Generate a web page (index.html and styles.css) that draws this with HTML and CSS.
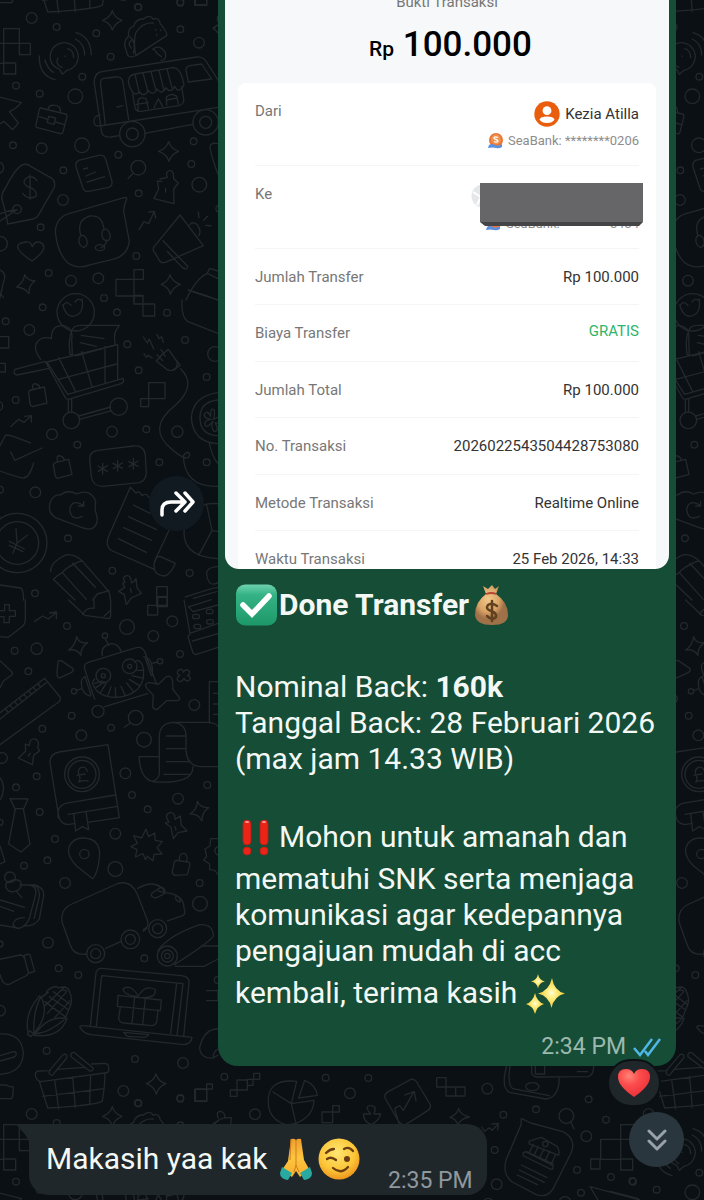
FILE: index.html
```html
<!DOCTYPE html>
<html lang="id">
<head>
<meta charset="utf-8">
<meta name="viewport" content="width=device-width, initial-scale=1">
<title>Chat</title>
<link rel="stylesheet" href="styles.css">
</head>
<body>
<svg class="wallpaper" aria-hidden="true">
  <defs>
    <g id="doodles" transform="scale(.33333)">
      <!-- truck and megaphone section -->
      <g>
        <circle cx="95" cy="54" r="16"/><circle cx="170" cy="81" r="10"/><circle cx="289" cy="100" r="10"/><circle cx="415" cy="22" r="10"/><circle cx="541" cy="8" r="10"/><circle cx="541" cy="88" r="10"/><circle cx="597" cy="128" r="16"/><circle cx="332" cy="170" r="10"/><circle cx="247" cy="230" r="10"/><circle cx="48" cy="257" r="10"/><circle cx="119" cy="281" r="10"/><circle cx="226" cy="289" r="22"/><circle cx="39" cy="436" r="10"/><circle cx="125" cy="445" r="16"/><circle cx="246" cy="436" r="22"/><circle cx="355" cy="464" r="10"/><circle cx="581" cy="424" r="10"/><circle cx="574" cy="492" r="10"/><circle cx="598" cy="554" r="22"/><circle cx="190" cy="511" r="10"/><circle cx="189" cy="600" r="16"/><circle cx="416" cy="580" r="10"/><circle cx="122" cy="682" r="10"/><circle cx="409" cy="768" r="10"/><circle cx="146" cy="819" r="10"/><circle cx="213" cy="842" r="16"/><circle cx="295" cy="835" r="16"/><circle cx="0" cy="731" r="22"/><circle cx="-6" cy="503" r="17"/><circle cx="658" cy="626" r="10"/>
        <path d="M11 86h47v44H-49v60h60zM11 189h36v33H11zM58 130h33v34H58zM-79 189h28v30h-28zM584-20h36v36h-36z"/>
        <path d="M337 32q6 22 29 29q-21 8-29 29q-6-21-29-29q22-8 29-29zM506 425q6 22 30 29q-23 9-29 30q-7-22-31-30q23-7 30-29zM74 824q8 17 31 19q-19 13-18 38q-13-18-37-20q21-13 24-37zM510 824q8 22 31 29q-22 8-30 30q-5-22-27-30q21-8 26-29z"/>
        <path d="M159 195a42 42 0 1 1 42 16l-14 12l-8-15q-12-4-20-13M174 174q-10 19 12 28M203 146q18 4 18 27M228 98q44 12 46 66M226 117q28 13 28 48M118 168q-2 58 47 71M135 180q7 25 25 37M195 168v2"/>
        <path d="M404 168q-22 10-25-17q-13-23 7-44q-4-22 15-28q6-23 29-22q18-16 29 0q20-5 21 13q20 24 21 36l-93 61q-9-37-1-68q20-33 53-30M390 110q20 17 10 50M394 122q-14 8 0 22M467 88v2M482 90v2M470 103v2M462 148q8 13 22 22M458 148q22-17 38 10q5 25-13 23"/>
        <path d="M304 391l-21-140q-3-34 27-37l280-43q20-2 31 17l34 54M302 253q-4-19 18-19l28-3q19-2 21 18l17 110M302 253l14 122M300 378l354-56M300 345q-20 2-18 21q3 17 20 10M304 391q1 23 28 20l25-4M433 400l146-27M558 211q-1-11 12-14l35-5l30 45l-70 9zM351 321l18-4M386 251q-4-26 20-29l112-19q25 0 34 52q-17 29-28 4q-13 24-26 4q-13 24-26 4q-14 24-27 4q-14 24-27 4q-16 22-32-24zM405 223l13 56M429 219l15 56M453 215l15 56M477 211l14 56M501 207l15 56M398 282l8 44q5 10 16 8l114-17q18-5 15-20l-6-37M414 330v-29q4-10 24-6l7 30M462 323l13-27l13 23M500 316l-1-25q16-14 31-2l5 23M409 313l36-5M500 300l31-6"/>
        <circle cx="397" cy="402" r="38"/><circle cx="397" cy="402" r="18"/><circle cx="617" cy="367" r="38"/><circle cx="617" cy="367" r="18"/>
        <path d="M-20 286l84 22q-3 5-22 20l-14 7l27 34l-17 20l-26-25l-20 12M122 324l74 18q6 2 5 8l-12 46q-2 6-8 5l-69-18q-6-1-4-9l10-46q0-3 4-4M144 328q3-14 17-12q23-1 20 22M118 350l25 8M167 366l26 8M146 349l21 5l-5 19l-20-5zM236 481l60-15q17-3 22 14l18 64q2 14-10 18l-60 12q-14 2-18-12l-20-61q-3-14 8-20M251 507l12-3M258 528l29-12M262 546l52-16"/>
        <path d="M5 594q0-15 13-33q24-50 46-65q17-8 28 3l65 37q11 10 5 28l-47 82q-5 9-16 11l-76 15q-4-28-18-78M-15 650q25-17 61-20M51 629L0 663M90 525v73M111 542q-12-16-29-10q-20 14-1 27q33 9 27 30q-24 12-40-9"/><circle cx="51" cy="628" r="13"/>
        <circle cx="415" cy="503" r="22"/><path d="M400 519l-16 17M480 537l22-5l-3-11q11-19 21-1l1 16l14 13l-14 18l1 44l-60-15l14-29l-4-24q7 2 14 1M497 565v11M417 689l15-24l14 6l16-35M447 636l16-2l4 20"/>
        <path d="M379 599q4-8-7-6l-154 45q-50 10-52 57q6 65 38 94q30 20 68 5l63-15q47-10 53-55l-17-91q1-18 8-34zM242 705q-13-46 28-57q39-3 42 42M320 720q-1 16-17 24"/><ellipse cx="249" cy="724" rx="12" ry="18" transform="rotate(-14 249 724)"/><ellipse cx="318" cy="705" rx="12" ry="18" transform="rotate(-14 318 705)"/><ellipse cx="300" cy="743" rx="14" ry="9"/>
        <path d="M540 645l70 92l-114 50q-13 4-18-6l-18-30q-2-10 5-14zM489 722l74 77q0 13-16 4l-45-49M568 675q8-12 23-2q15 19 5 34M595 636l2 17M611 661l12-12M618 676l15 2M96 783q-76-50-18-57q14-2 19 14q7-18 24-13q30 16-25 56z"/>
        <path d="M348 838h54v50h-54zM402 809h28v29h-28zM402 838v62M348 888h80M558 900q30-65 64-80l32 16M622 820l7-15l25 8M580 875l50 16M654 431q-25-5-24 12q5 30 24 80M654 75l-14 8l14 16M0 810q22 10 10 38q-8 40-20 80M0 880l10 12"/>
      </g>
      <!-- shopping cart section -->
      <g transform="translate(0 900)">
        <circle cx="227" cy="37" r="56"/><circle cx="128" cy="22" r="10"/><circle cx="17" cy="64" r="10"/><circle cx="88" cy="90" r="16"/><circle cx="351" cy="37" r="10"/><circle cx="312" cy="-6" r="10"/><circle cx="501" cy="38" r="10"/><circle cx="382" cy="133" r="10"/><circle cx="555" cy="120" r="10"/><circle cx="645" cy="162" r="22"/><circle cx="416" cy="211" r="10"/><circle cx="620" cy="231" r="10"/><circle cx="47" cy="300" r="10"/><circle cx="-6" cy="318" r="14"/><circle cx="156" cy="403" r="16"/><circle cx="232" cy="434" r="10"/><circle cx="336" cy="395" r="16"/><circle cx="439" cy="388" r="10"/><circle cx="532" cy="395" r="17"/><circle cx="478" cy="487" r="10"/><circle cx="620" cy="487" r="10"/><circle cx="106" cy="577" r="16"/><circle cx="0" cy="569" r="10"/><circle cx="204" cy="715" r="10"/><circle cx="337" cy="812" r="10"/><circle cx="569" cy="819" r="10"/><circle cx="105" cy="880" r="10"/><circle cx="511" cy="558" r="15"/>
        <path d="M188 15q14 45 43 30q22-10 15-48M190 16q8-16 23 0M225 6q9-13 20-5M0 110h26v34H0M0 190h16v26H0M402-14h27v26h-27zM429 12h35v36h-35zM446 248h49v48h-49zM422 296h24v24h-24zM546 0q-3 50 16 64l92 36M654 0l-90-30"/>
        <path d="M122 178q-25-33-10-52q14-20 42-10q-1-40 35-39q32 5 26 44l2 42M210 163q-6-45 5-70q5-18 28-17h115l-10 15q-8 14-2 44l-110 30q-13 4-26-2M244 106l68 10M241 128l48 11"/>
        <path d="M45 208l91-24l59 107q4 8 10 7l158-47q12-5 6-16l-166 48l-62-97l212-52v102M45 208q-8 14 6 17l93-19M176 173l51 102M245 155l31 105M315 139v110M173 239l177-47M205 298v40M215 296v40M236 348l96-27M239 358l96-26"/><circle cx="214" cy="361" r="25"/><circle cx="356" cy="320" r="26"/>
        <path d="M93 270l40-9l8 48l-44 11q-6-2-7-9l-4-33q0-6 7-8zM99 268q-6-22 13-15q9 6 7 12M168 487l38-9l10 45l-44 12q-4-1-6-7l-6-32q0-6 8-9zM173 484q-7-22 12-15q9 6 7 12"/>
        <path d="M32 380l24-22l16 9l22-20M74 349l20-2v19M-10 455l27-50l16 2l59 22M32 456l12 25l82-37M-10 510q74 25 80 24q18 0 31-45"/>
        <path d="M430 111l12 18l6-12l13 30M471 104l6 12l8-6l5 17M432 162l8 10l5-6l11 8M505 148l27 38l-3 19q-10 11-27 4l-33-26q16-21 36-35M483 149l13 20M471 164l17 18M540 196l-7-10M518 210l22-14M542 206q50 50-16 110q-90 70-8 134q48 40 51 13q-6-14-19 4q3 95 104 92"/>
        <path d="M654 278q-75 10-80 75q5 75 80 78M654 300q-54 5-54 53q0 52 54 54M612 345q10-19 20 5q-1-31 11-19q2 20-4 28q28-17 31-3q-9 18-25 12q15 30-4 25q-9-13-3-29q-20 27-24 6q4-11 20-12q-18-1-22-13M628 430q10 45 26 60"/>
        <path d="M294 451l106-13q34-2 36 28l3 55q-3 22-21 27l-109 11q-30 0-35-28l-5-52q-1-25 25-28zM308 490v32M294 498l28 16M322 497l-27 17M353 482v31M339 490l28 15M367 489l-27 17M400 475v32M386 484l28 15M414 483l-27 17"/>
        <path d="M182 585q20-18 48-3q42-18 57 22q-3 24 0 32q11 30-3 44q-13 12-35 4l-83-31q-28-20-12-54q11-17 28-14zM251 617q-36-23-42 12q5 36 38 20M251 617v-12M251 618h-15"/>
        <path d="M391 562l-62 139q-18 40 9 52l125 55M391 562l17 17q10-9 18 8q13-10 20 5l79 36M400 615l50 25M385 650l85 39M371 683l84 38M355 716l84 41M526 650l-62 133q-10 43 31 45q18-6 31-38l-44-20q-14-3-17 15"/>
        <circle cx="52" cy="729" r="89"/><circle cx="52" cy="729" r="64"/><path d="M-10 650h10M48 686l3 44l-13 30M51 730l31-24M28 724l45 23M28 736l41 19M654 611q-78-6-99 60q-20 100 99 105M620 614l16 78l-40 74M638 692l20 3"/>
        <path d="M152 815q-2-28 45-50q25-6 51 19l78 90q5 10 5 26M160 838q10-11 27-20q10-14 33-24q18-12 28-10M160 838l65 62M187 818l72 80M218 790l68 72M278 900l14-18l35-10M0 855l62 9q8 2 9 36M368 850l7-3q-11-16 5-20q13-2 14 21q6 1 14-12l3 27l13 17l-30 14l-15 20l-6-30l-17-10l18-12zM391 865l3 12M470 860h32v60h-32zM470 892h32M654 800q-40 2-33 28q6 35 33 20M556 891q90-30 98-28M580 895l70-20"/>
      </g>
      <!-- robot and book section -->
      <g transform="translate(0 1800)">
        <circle cx="201" cy="78" r="10"/><circle cx="381" cy="81" r="22"/><circle cx="460" cy="108" r="16"/><circle cx="517" cy="64" r="16"/><circle cx="540" cy="162" r="10"/><circle cx="44" cy="152" r="10"/><circle cx="110" cy="146" r="17"/><circle cx="85" cy="214" r="10"/><circle cx="215" cy="347" r="10"/><circle cx="127" cy="386" r="10"/><circle cx="244" cy="406" r="16"/><circle cx="333" cy="383" r="10"/><circle cx="432" cy="419" r="22"/><circle cx="583" cy="315" r="16"/><circle cx="6" cy="474" r="16"/><circle cx="110" cy="529" r="10"/><circle cx="48" cy="562" r="10"/><circle cx="119" cy="636" r="10"/><circle cx="0" cy="667" r="9"/><circle cx="376" cy="520" r="16"/><circle cx="396" cy="585" r="10"/><circle cx="443" cy="628" r="10"/><circle cx="534" cy="596" r="16"/><circle cx="622" cy="555" r="10"/><circle cx="346" cy="701" r="16"/><circle cx="165" cy="717" r="10"/><circle cx="142" cy="781" r="10"/><circle cx="72" cy="797" r="10"/><circle cx="346" cy="807" r="22"/><circle cx="195" cy="849" r="16"/><circle cx="599" cy="849" r="10"/>
        <path d="M0 110l25 2l41-32q10-8 10-24V0M14 14h14v18h18v17H28v19H12V50h-16V32h18zM104 64l24-16l17 9l25-20M149 39l20-3v20M206 0l48 46l74 10l4-8V0M248 44q10-23 34-19V0M312 49l18-17M443 16h30v29h-30zM473-10h28v26h-28zM552 0l18 100l84-30M565 20l14 15l75-20M570 105q-7 0-5 9l14 45l8 5l67-22M578 123l76-22M568 20l66-21"/>
        <rect x="578" y="43" width="20" height="13" rx="6"/><rect x="619" y="28" width="20" height="13" rx="6"/><rect x="582" y="73" width="20" height="13" rx="6"/><rect x="620" y="59" width="20" height="13" rx="6"/>
        <path d="M230 110q6 22 33 18q-22 15-20 38q-12-20-37-16q20-13 24-40zM592 604q8 20 34 19q-21 15-20 40q-13-23-36-21q22-13 22-38zM0 182l36 34q4 8-5 12l-21 15l-10 20M184 182l34 23q5 8-5 13l-32 15q-9 2-10-9q1-34 5-42zM535 211q12-8 15 6q7-14 18-3q3 9-6 12q15 7 5 15q-11 4-15-6q-8 16-19 6q-5-8 6-15q-12-6-4-15"/>
        <path d="M315 114l11 22M307 166q-6-28 26-35q22-1 30 23M255 207q-6-15 10-20l144-44q17-5 26 14l35 97M254 207l30 91M314 320l129-39M243 267l-14 5M270 288q-26-7-26-38q0-17 12-20M273 285l-18-55M431 170q30 6 26 55M472 186l-16 4M436 175l18 52M284 237q-10 10-4 18q14 37 70 37q70-6 80-60q4-45-17-51q-6 1-10 5M284 250l22-7M288 263l25-18M300 280l18-29M323 289l10-28M347 291l-1-28M375 286l-12-27M400 274l-20-25M419 257l-31-19M430 235l-34-8M432 211h-22"/><circle cx="315" cy="107" r="8"/><circle cx="310" cy="227" r="22"/><circle cx="310" cy="227" r="6"/><circle cx="389" cy="199" r="22"/><circle cx="389" cy="199" r="6"/><circle cx="222" cy="274" r="8"/><circle cx="480" cy="184" r="8"/><circle cx="294" cy="334" r="18"/>
        <path d="M512 231q8 6 6 36l20 26q4 10-12 9l-26 0l-28 26q-14 3-14-12l2-30l-20-22q-10-14 8-16l28 4l22-21q8-5 14 0"/>
        <path d="M0 338l134-103l46 56q4 8-4 15L0 434M0 357l138-108M16 327l8 9M30 316l8 9M44 305l8 9M58 295l8 9M72 284l8 9M86 273l8 9M100 262l8 9M114 252l8 9"/><circle cx="407" cy="353" r="22"/><path d="M391 369l-18 13M76 432l12 5q0-23 18-20q14 7 7 27l6 8l-18 14l-4 28l-42-20l22-20zM91 460l-6 8"/>
        <path d="M654 245h-26v124M640 280h14M640 312h14M640 343h14M417 470h61M417 470q4 75 52 76q110 6 110-46M478 520V407q2-37 40-40q38 3 40 37v48q4 45 42 48h54M520 367h108q19 2 26 12M460 543q17-6 18-23M499 408h56M499 446h58M499 485h70M492 523h75"/>
        <path d="M178 456l146-22l34 219l-95 14M221 671q-38 10-45-24l-26-158q-1-28 28-33M175 654q-6-35 21-44l150-25M204 643l149-24M221 641l6 52l20-13l19 9l-8-54"/><circle cx="246" cy="523" r="52"/><circle cx="246" cy="523" r="42"/><path d="M262 514q-4-15-18-12q-12 6-8 20q8 18 0 24q15-6 28-3M231 526l24-4"/>
        <path d="M30 596l54 1l-13 29H45zM46 626l-20 106l37 24l27-23l-20-107M0 534q20 25 2 64M0 738l15 47l-15 7M438 687l8 23l18-11l2 22l21 4l-16 18l15 19l-24 1l-3 19l-17-13l-5 10l-8-18l-23 10l5-22l-18-9l19-10l-11-23l24 7zM278 836l-48-38q-30-30-23-56q11-29 44-28q46 2 48 46q-4 60-21 76z"/><circle cx="253" cy="762" r="14"/>
        <path d="M496 670l11-4q-17-24 4-28q15-1 14 20l16-10l3 28l17 17l-27 5l-14 18l-7-34zM525 680l3 10M528 781l37 5q5 2 5 8l-8 30l-37 2q-9-3-8-11l6-30zM538 780q-1-21 15-20q12 5 7 24M654 716h-22l-2 22l-15 9l5 22l-9 11l18 12v17l15 2l10 12M654 740q-20 10 0 26"/>
      </g>
      <!-- camper, laptop and basket section -->
      <g transform="translate(0 2640)">
        <circle cx="144" cy="188" r="16"/><circle cx="0" cy="192" r="9"/><circle cx="176" cy="265" r="10"/><circle cx="235" cy="285" r="10"/><circle cx="433" cy="235" r="10"/><circle cx="600" cy="71" r="22"/><circle cx="0" cy="392" r="16"/><circle cx="140" cy="512" r="10"/><circle cx="405" cy="537" r="10"/><circle cx="549" cy="549" r="16"/><circle cx="370" cy="633" r="16"/><circle cx="414" cy="669" r="10"/><circle cx="541" cy="654" r="10"/><circle cx="673" cy="590" r="10"/><circle cx="765" cy="703" r="16"/><circle cx="653" cy="300" r="10"/>
        <circle cx="30" cy="-8" r="16"/><path d="M20 8q-10 20 15 28q35-5 27-31q-14-13-42 3M60 15h28q20 2 20 25l-16 60q-4 26-23 40q-18 12-30-5q2-22 34-22M72 15h33q28 8 26 32l-13 70q-12 21-44 21M0 60l74 22M0 79l41 15M0 135l58 10M50 35l15 18M100 15q20 7 18 35l-16 66"/>
        <path d="M260 222q-38 6-49-26l-25-70q-5-39 30-54L350 12q42-15 62 31l30 77q7 20-12 29M317 205l45-20M413 25q24-14 45-13q28 3 38 27M440 145l-10 9M502 123l46-16q12-8 4-23q-1-42-57-46l-20-5M460 37l20-14q10-3 14 7q4 9-4 13l-23 11q-14-3-13-11q1-4 6-6M528 47q-5 16 12 19q4-14-12-19"/><circle cx="287" cy="221" r="27"/><circle cx="287" cy="221" r="15"/><circle cx="391" cy="178" r="28"/><circle cx="391" cy="178" r="15"/><circle cx="473" cy="146" r="27"/><circle cx="473" cy="146" r="15"/>
        <circle cx="502" cy="228" r="30"/><circle cx="502" cy="228" r="18"/><circle cx="502" cy="228" r="8"/><path d="M474 212q30-45 125-78q40-3 41 34q-6 15-117 86M654 198h-50M526 259h86l42-22M-10 240l70-15q10 0 13 7l12 44q0 8-8 12l-50 25q-20 4-27-30M70 232q6-13 20-8l14 50l-16 5M93 470l7-9l-10-9l-8 11zM84 456q-12-55 35-109M102 460q-4-60 20-110q30 50-20 110M108 458q40-53 93-42q-22 59-99 50M102 462q42-2 90-42M122 350q12 2 20-18q20-18 35-8q22-9 30 8q11 22 6 40l-16 40M135 365l60 45M148 350l58 40M160 335l50 38M142 400l58-65M165 412l45-50M135 377l55-52M130 347l15-10M178 335q8-8 20-3"/>
        <path d="M271 438l17-160q4-14 17-13l240 22q22 3 22 20l-16 162M289 440l16-153l244 24l-18 156M530 310l-18 150M248 437l328 35q-2 20-25 22l-277-30q-22-2-34-22q0-6 8-5M371 457q8 14 24 13l38 2q10-1 13-8zM354 346l130 14l-3 32l-129-13zM361 381l-5 34q3 13 15 14l85 8q12-2 14-12l4-35M404 350l-8 80M436 354l-8 80M414 350q-45-6-44-24q22-15 45 22q19-35 50-20q8 25-40 25"/>
        <path d="M0 462q65-3 70 57q-3 60-70 64M0 527l43-13q12 8 0 17L0 543M0 615h21q3 6 18 5q2 20-3 36H0M148 572l42-49q14-2 10 11l-43 52q-12 0-9-14M213 530q-2-15 11-12l56 47q0 9-11 8zM106 583q0-9 11-10l34-1M170 568l84-6M275 552l40-2q12 2 11 14q3 15-12 15l-191 26q-16-2-17-22M118 604l25 80q140-8 164-20q10-65 7-85M164 600l12 87M218 591l8 92M272 585l-3 88M128 649l185-23"/>
        <path d="M468 582q6 22 30 29q-23 9-29 31q-7-23-30-31q22-8 29-29zM586 627h34v36h-34zM620 612h17v15h-17zM691 630h20v19h-20zM711 600h31v30h-31zM742 598h17v18h-17zM761 580h18v18h-18zM654 447q-40-2-55 54q0 18 12 27q20 14 43-2M640 535q-1-20 14-28M620 332h34v30h-34M640 735q18-25 54-22l-2 20M655 715q-9-23 9-20q12 5 11 20"/>
      </g>
      <!-- strip below the sent message -->
      <g transform="translate(840 3120)">
        <circle cx="137" cy="113" r="10"/><circle cx="265" cy="114" r="10"/><circle cx="210" cy="160" r="16"/><circle cx="622" cy="146" r="16"/><circle cx="670" cy="224" r="10"/><circle cx="768" cy="208" r="10"/><circle cx="926" cy="178" r="10"/><circle cx="978" cy="239" r="10"/><circle cx="919" cy="289" r="16"/><circle cx="644" cy="330" r="10"/><circle cx="891" cy="390" r="10"/><circle cx="993" cy="411" r="10"/><circle cx="1057" cy="423" r="10"/><circle cx="903" cy="458" r="10"/><circle cx="650" cy="433" r="16"/><circle cx="855" cy="488" r="18"/><circle cx="625" cy="490" r="15"/>
        <path d="M34 191L50 124Q-40 115-35 190Q-33 240 20 255L48 250Q100 230 102 181zM34 191l-55-35M34 191l14 60M74 121l-18 53l56-8q-4-31-38-45M126 216h32v32h-32zM158 197h20v19h-20zM250 222h22q-21-25 0-25q20-1 10 25h20q-4 20-28 32q-24-10-24-32"/>
        <path d="M325 155l68-37q10-2 17 8l41 68q2 12-8 18l-65 41q-13 4-24-12l-39-67q-3-12 10-19M357 250l-13-45l15-8l11 14l30-53M375 165l28-10l5 28M470 113h28v28h-28zM498 141h29v27h-29zM527 141h28v27h-28zM536 206q4 18 32 25q-26 4-35 25q-3-20-23-24q21-8 26-26zM606 262l8 12l14-11l8 8l18-18M636 252l19-2l-2 20M680 78q-18 65 8 79l110 20q40-5 40-66M690 78q-8 57 8 68l110 21M755 78v22q5 12 19 11l150-1q17-4 17-32M766 78v24h28V78M892 95h30"/><ellipse cx="757" cy="140" rx="20" ry="12"/>
        <circle cx="859" cy="228" r="22"/><path d="M872 245l10 22M724 235l-1 20l-43 100q-16 46 17 71l72 38q40 12 56-29l48-95q18-43-24-65l-97-26zM748 312q-3-10 7-11l29-9l48 28q8 14 4 26zM738 334l82 38M760 314l-13 26M775 320l-13 26M792 327l-13 26M809 334l-13 28M827 343l-12 27M731 348l82 40q9 1 5-12l-80-40q-13-1-7 12M724 375l77 38M718 390l75 37M712 405l60 29M930 440l30 50M930 440l150 40"/><circle cx="796" cy="312" r="8"/>
      </g>
    </g>
  </defs>
  <g class="wallpaper__lines">
    <use href="#doodles"/>
    <use href="#doodles" x="617"/>
    <use href="#doodles" y="1096"/>
    <use href="#doodles" x="617" y="1096"/>
    <use href="#doodles" y="-1096"/>
    <use href="#doodles" x="617" y="-1096"/>
  </g>
</svg>

<main class="chat">
  <article class="row row--sent">
    <button class="forward" type="button" aria-label="Teruskan">
      <svg width="36" height="28" viewBox="0 0 36 28" aria-hidden="true"><path d="M3 26v-5q0-8 9-8h14M17 4l9 9l-9 9M26 4l8 9l-8 9"/></svg>
    </button>
    <div class="bubble bubble--sent">
      <section class="receipt">
        <header class="receipt__head">
          <p class="receipt__title">Bukti Transaksi</p>
          <p class="receipt__amount"><span class="receipt__currency">Rp</span> 100.000</p>
        </header>
        <dl class="receipt__card">
          <div class="item item--party">
            <dt>Dari</dt>
            <dd>
              <span class="person">
                <svg width="26" height="26" viewBox="0 0 26 26" aria-hidden="true"><circle cx="13" cy="13" r="12.7" fill="#e95d0c"/><circle cx="13" cy="9.700" r="4.400" fill="#fff"/><path d="M5.500 18.500q1-3 7.500-3t7.500 3q-2 3.500-7.500 3.500t-7.500-3.500" fill="#fff"/></svg>
                Kezia Atilla
              </span>
              <span class="bank">
                <svg width="16" height="16" viewBox="0 0 16 16" aria-hidden="true"><circle cx="8" cy="7" r="7" fill="#e8763a"/><circle cx="8" cy="6.500" r="5" fill="#f0914c"/><path d="M10 4.500q-3.500-1.500-4 .5q0 1 2 1.500t2 1.700q-1 1.800-4 .3" fill="none" stroke="#fff" stroke-width="1.300"/><path d="M1 12q3-2 6 0t7-1v3q-3 2-6 1t-8 0z" fill="#5b8fdf"/></svg>
                SeaBank: ********0206
              </span>
            </dd>
          </div>
          <div class="item item--party">
            <dt>Ke</dt>
            <dd class="masked">
              <svg class="masked__avatar" width="26" height="24" viewBox="0 0 26 24" aria-hidden="true"><circle cx="12" cy="12" r="11.500" fill="#e4e8ea"/><path d="M2 8l8 5l-4 8" fill="none" stroke="#fff" stroke-width="2"/></svg>
              <span class="bank bank--spread">
                <svg width="16" height="16" viewBox="0 0 16 16" aria-hidden="true"><circle cx="8" cy="7" r="7" fill="#e8763a"/><path d="M1 11q3-2 6 0t7-1v3q-3 2-6 1t-8 0z" fill="#5b8fdf"/></svg>
                <span>SeaBank:</span><span class="bank__end">5434</span>
              </span>
              <svg class="masked__cover" viewBox="0 0 163 44" preserveAspectRatio="none" aria-hidden="true"><path d="M0 0h163v39l-4 4H5l-5-4z" fill="#444446"/><path d="M0 0h163v39H0z" fill="#666668"/></svg>
            </dd>
          </div>
          <div class="item"><dt>Jumlah Transfer</dt><dd>Rp 100.000</dd></div>
          <div class="item"><dt>Biaya Transfer</dt><dd class="free">GRATIS</dd></div>
          <div class="item"><dt>Jumlah Total</dt><dd>Rp 100.000</dd></div>
          <div class="item"><dt>No. Transaksi</dt><dd>2026022543504428753080</dd></div>
          <div class="item"><dt>Metode Transaksi</dt><dd>Realtime Online</dd></div>
          <div class="item"><dt>Waktu Transaksi</dt><dd>25 Feb 2026, 14:33</dd></div>
        </dl>
      </section>

      <div class="message">
        <p class="message__lead"><svg class="emoji" viewBox="0 0 44 48" role="img" aria-label="centang"><defs><linearGradient id="check" x2="0" y2="1"><stop stop-color="#6fd3ae"/><stop offset=".25" stop-color="#35b386"/><stop offset="1" stop-color="#1d9868"/></linearGradient></defs><rect x="1" y="3.500" width="41" height="41" rx="9" fill="url(#check)"/><path d="M8 24l9 9L34 15" fill="none" stroke="#fff" stroke-width="5.500" stroke-linecap="round"/></svg><strong>Done Transfer</strong><svg class="emoji" viewBox="0 0 44 48" role="img" aria-label="kantong uang"><defs><radialGradient id="bag" cx=".4" cy=".35"><stop stop-color="#f0c98b"/><stop offset=".65" stop-color="#dba467"/><stop offset="1" stop-color="#9f7148"/></radialGradient></defs><path d="M17 13l-3-8l5 3l4-4l3 4l4-3l-3 8q12 8 12 21q0 10-16 10T6 34q0-13 11-21" fill="url(#bag)"/><path d="M17 13q6-2 10 0" fill="none" stroke="#b8452f" stroke-width="1.800"/><path d="M28 25q-5-4-9-1q-3 4 3 6t5 6q-4 4-9-1M23 20v20" fill="none" stroke="#61411f" stroke-width="2.500" stroke-linecap="round"/></svg></p>
        <p>Nominal Back: <strong>160k</strong><br>Tanggal Back: 28 Februari 2026<br>(max jam 14.33 WIB)</p>
        <p><svg class="emoji" viewBox="0 0 44 48" role="img" aria-label="tanda seru ganda"><g fill="#ec2418" stroke="#b61e1a" stroke-width=".8"><rect x="8" y="7" width="8" height="25" rx="4"/><circle cx="12" cy="38" r="4"/><rect x="25" y="7" width="8" height="25" rx="4"/><circle cx="29" cy="38" r="4"/></g><path d="M11 9h2M28 9h2" stroke="#ff9185" stroke-width="2" stroke-linecap="round"/></svg>Mohon untuk amanah dan<br>mematuhi SNK serta menjaga<br>komunikasi agar kedepannya<br>pengajuan mudah di acc<br>kembali, terima kasih <svg class="emoji" viewBox="0 0 44 48" role="img" aria-label="kilau"><defs><radialGradient id="star"><stop stop-color="#fffce0"/><stop offset=".3" stop-color="#fff087"/><stop offset="1" stop-color="#efc532"/></radialGradient></defs><g fill="url(#star)"><path d="M27 9q2 13 13 15.500Q29 27 26.500 39Q24 27 13 24.500Q24 22 27 9z"/><path d="M13 5q1 6 7 7.500q-6 1-7 7q-1-6-7-7q6-1.500 7-7.500z"/><path d="M10 24q2 9 9 11q-7 2-9 10q-2-8-9-10q7-2 9-11z"/></g></svg></p>
      </div>
      <footer class="stamp"><time>2:34 PM</time>
        <svg width="30" height="20" viewBox="0 0 30 20" role="img" aria-label="dibaca"><path d="M2 11l6 7L20 2M13 14l3 4L28 2" fill="none" stroke="#4fb6e6" stroke-width="2.500"/></svg>
      </footer>
      <button class="reaction" type="button" aria-label="Reaksi hati">
        <svg width="34" height="30" viewBox="0 0 34 30" aria-hidden="true"><defs><radialGradient id="heart" cx=".35" cy=".25" r=".8"><stop stop-color="#ff8478"/><stop offset=".4" stop-color="#fd4d4c"/><stop offset="1" stop-color="#e82f39"/></radialGradient></defs><path d="M17 29Q1 18 1 9q0-8 8-8q6 0 8 5q2-5 8-5q8 0 8 8q0 9-16 20z" fill="url(#heart)"/></svg>
      </button>
    </div>
  </article>

  <article class="row row--received">
    <div class="bubble bubble--received">
      <svg class="tail" width="24" height="24" viewBox="0 0 24 24" aria-hidden="true"><path d="M0 0h24v24H12v-6Q11 13 3 5Q0 2 0 0" fill="#20272b"/></svg>
      <p class="reply">Makasih yaa kak <svg class="emoji" viewBox="0 0 44 48" role="img" aria-label="tangan terkatup"><defs><linearGradient id="hand" x2="0" y2="1"><stop stop-color="#ef9d2b"/><stop offset=".5" stop-color="#fdc63f"/><stop offset="1" stop-color="#f8ae2e"/></linearGradient></defs><path d="M16 4q5-1 5 2q0-3 5-2l3 21l5 9l-9 8l-4-6l-4 6l-10-7l6-9z" fill="url(#hand)"/><path d="M21 5v25l-2 7M21 30l3 7M16 4l-1 21" stroke="#cf7e20" fill="none"/><path d="M7 32l10 6l-4 7q-8-1-8-7zM35 32l-10 6l4 7q8-1 8-7z" fill="#29aaa0"/></svg><svg class="emoji emoji--tight" viewBox="0 0 44 48" role="img" aria-label="kedipan"><defs><radialGradient id="face" cx=".45" cy=".35" r=".65"><stop stop-color="#ffe672"/><stop offset=".65" stop-color="#fcc638"/><stop offset="1" stop-color="#ef961e"/></radialGradient></defs><circle cx="22" cy="24" r="20.500" fill="url(#face)"/><path d="M9 18q4-4 8-4M27 14q5-3 9 2M10 24q4-3 9 1M16 33q8 7 15-1" fill="none" stroke="#6a3d12" stroke-width="2.300" stroke-linecap="round"/><circle cx="30" cy="24" r="3" fill="#6a3d12"/></svg></p>
      <footer class="stamp stamp--received"><time>2:35 PM</time></footer>
    </div>
  </article>

  <button class="jump" type="button" aria-label="Ke pesan terbaru">
    <svg width="20" height="22" viewBox="0 0 20 22" aria-hidden="true"><path d="M2 2l8 8l8-8M2 12l8 8l8-8"/></svg>
  </button>
</main>
</body>
</html>
```
FILE: styles.css
```css
* { box-sizing: border-box; }

body {
  margin: 0;
  background: #0b1014;
  color: #f3f8f5;
  font-family: Roboto, "Liberation Sans", sans-serif;
}

p, dl, dd { margin: 0; }

button {
  display: grid;
  place-items: center;
  padding: 0;
  border: 0;
  border-radius: 50%;
}

.wallpaper {
  position: absolute;
  inset: 0;
  width: 100%;
  height: 100%;
}

.wallpaper__lines {
  fill: none;
  stroke: #22282c;
  stroke-width: 4;
  stroke-linejoin: round;
  stroke-linecap: round;
}

.chat {
  position: relative;
  display: flex;
  flex-direction: column;
  gap: 58px;
  min-height: 100vh;
  padding-bottom: 5px;
  overflow: hidden;
}

.row { display: flex; }

.row--sent {
  align-items: center;
  justify-content: flex-end;
  gap: 14px;
  padding-right: 28px;
}

.row--received { padding-left: 29px; }

.forward {
  width: 55px;
  height: 55px;
  margin-bottom: 60px;
  background: #101a20;
}

.forward path {
  fill: none;
  stroke: #fff;
  stroke-width: 3.500;
  stroke-linecap: round;
  stroke-linejoin: round;
}

.bubble { position: relative; }

.bubble--sent {
  width: calc(100% - 218px);
  padding: 0 7px 7px;
  border-radius: 0 0 20px 20px;
  background: #154d37;
}

/* Receipt attachment, cropped by the top and the lower edge of its frame */
.receipt {
  max-height: 569px;
  padding: 0 13px;
  overflow: hidden;
  border-radius: 0 0 14px 14px;
  background: #f6f8fa;
  color: #333;
  font-size: 15px;
  line-height: 20px;
}

.receipt__head {
  display: flow-root;
  height: 83px;
  text-align: center;
}

.receipt__title {
  margin-top: -8px;
  color: #777;
}

.receipt__amount {
  margin-top: 13px;
  padding-left: 7px;
  color: #000;
  font-size: 35px;
  font-weight: 500;
  line-height: 40px;
}

.receipt__currency { font-size: 21px; }

.receipt__card {
  padding: 0 17px;
  border-radius: 8px 8px 0 0;
  background: #fff;
}

.item {
  display: flex;
  align-items: center;
  justify-content: space-between;
  height: 57px;
  border-bottom: 1px solid #f5f5f5;
}

.item:nth-child(odd) { height: 56px; }

.item dt { color: #777; }

.item--party,
.item--party:nth-child(odd) {
  align-items: flex-start;
  height: 83px;
  padding-top: 18px;
}

.item--party dd {
  display: flex;
  flex-direction: column;
  align-items: flex-end;
}

.person,
.bank {
  display: flex;
  align-items: center;
}

.person {
  gap: 5px;
  height: 26px;
}

.bank {
  gap: 4px;
  margin-top: 4px;
  color: #8d8d8d;
  font-size: 13px;
}

.free {
  margin-bottom: 4px;
  color: #2fb56b;
}

.masked {
  position: relative;
  width: 168px;
}

.masked__avatar { align-self: flex-start; }

.bank--spread {
  width: 153px;
  margin-top: 6px;
}

.bank__end { margin-left: auto; }

.masked__cover {
  position: absolute;
  top: -1px;
  right: -4px;
  width: 163px;
  height: 44px;
}

/* Message text */
.message {
  padding: 12px 6px 0 10px;
  font-size: 30px;
  line-height: 36px;
}

.message p + p { margin-top: 36px; }

.message .message__lead + p { margin-top: 40px; }

.emoji {
  width: 44px;
  height: 48px;
  vertical-align: -14px;
}

.emoji--tight { margin-left: -2px; }

.stamp {
  display: flex;
  align-items: center;
  justify-content: flex-end;
  gap: 6px;
  margin-top: 18px;
  padding-right: 7px;
  color: #9cb9ad;
  font-size: 23px;
  line-height: 24px;
}

.reaction {
  position: absolute;
  right: 15px;
  bottom: -41px;
  width: 54px;
  height: 48px;
  border: 2px solid #0b1014;
  border-radius: 24px;
  background: #20272b;
}

.bubble--received {
  display: flex;
  align-items: flex-end;
  gap: 27px;
  height: 71px;
  padding: 0 14px 2px 17px;
  border-radius: 0 20px 20px 20px;
  background: #20272b;
}

.tail {
  position: absolute;
  top: 0;
  left: -12px;
}

.reply {
  align-self: center;
  font-size: 30px;
  line-height: 36px;
}

.stamp--received {
  padding-right: 0;
  color: #8f989d;
}

.jump {
  position: absolute;
  right: 20px;
  bottom: 33px;
  width: 55px;
  height: 55px;
  background: #2a363d;
}

.jump path {
  fill: none;
  stroke: #98a2a8;
  stroke-width: 3;
  stroke-linecap: round;
  stroke-linejoin: round;
}
```
